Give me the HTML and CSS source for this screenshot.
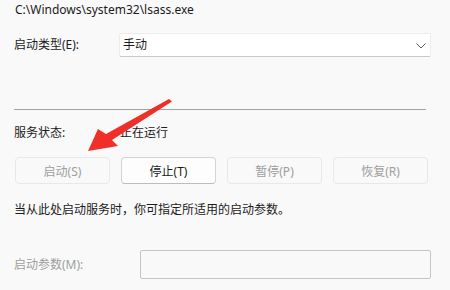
FILE: index.html
```html
<!DOCTYPE html>
<html lang="zh-CN">
<head>
<meta charset="utf-8">
<link rel="stylesheet" href="styles.css">
</head>
<body>
<div class="page">
  <div class="path">C:\Windows\system32\lsass.exe</div>
  <div class="row row-type">
    <span class="label">启动类型(E):</span>
    <div class="combo">
      <span class="combo-text">手动</span>
      <svg class="chev" width="10" height="6" viewBox="0 0 10 6"><path d="M0.5 0.5 L5 5 L9.5 0.5" fill="none" stroke="#5a5a5a" stroke-width="1"/></svg>
    </div>
  </div>
  <div class="sep"></div>
  <div class="row row-status">
    <span class="label status-label">服务状态:</span>
    <span class="value">正在运行</span>
  </div>
  <div class="buttons">
    <div class="btn disabled">启动(S)</div>
    <div class="btn">停止(T)</div>
    <div class="btn disabled">暂停(P)</div>
    <div class="btn disabled">恢复(R)</div>
  </div>
  <div class="desc">当从此处启动服务时，你可指定所适用的启动参数。</div>
  <div class="row row-params">
    <span class="label param-label">启动参数(M):</span>
    <div class="input"></div>
  </div>
</div>
<svg class="arrow" width="450" height="290" viewBox="0 0 450 290">
  <polygon points="88,151 98,129 106,134 169,99 172,101.5 112,140 118,146" fill="#ee2f2a"/>
</svg>
</body>
</html>
```
FILE: styles.css
```css
html, body {
  margin: 0;
  padding: 0;
  background: #f9f9f9;
  width: 450px;
  height: 290px;
  overflow: hidden;
}
body {
  font-family: "Noto Sans", "Noto Sans CJK SC", sans-serif;
  font-size: 12px;
  color: #1b1b1b;
  position: relative;
}
.page {
  padding: 2px 19px 0 14px;
}
.path {
  line-height: 16px;
  height: 16px;
  padding-left: 1px;
}
.row {
  display: flex;
  align-items: center;
}
.label {
  line-height: 16px;
  flex: none;
}
.row-type {
  margin-top: 15px;
}
.row-type .label {
  width: 105px;
}
.combo {
  flex: 1;
  height: 24px;
  box-sizing: border-box;
  background: #ffffff;
  border: 1px solid #ececec;
  border-bottom-color: #c9c9c9;
  border-radius: 2px;
  display: flex;
  align-items: center;
  justify-content: space-between;
  padding: 0 4px 0 3px;
}
.combo-text {
  line-height: 16px;
}
.chev {
  display: block;
  margin-top: 1px;
}
.sep {
  margin-top: 52px;
  height: 1px;
  width: 412px;
  background: #a3a3a3;
}
.row-status {
  margin-top: 15px;
}
.status-label {
  width: 106px;
}
.value {
  line-height: 16px;
}
.buttons {
  margin-top: 16px;
  display: grid;
  grid-template-columns: repeat(4, 95px);
  column-gap: 11px;
  padding-left: 1px;
}
.btn {
  height: 27px;
  box-sizing: border-box;
  border: 1px solid #d4d4d4;
  border-bottom-color: #bdbdbd;
  border-radius: 4px;
  background: #fdfdfd;
  display: flex;
  align-items: center;
  justify-content: center;
  color: #1b1b1b;
}
.btn.disabled {
  background: #f9f9f9;
  border-color: #e8e8e8;
  color: #9e9e9e;
}
.desc {
  margin-top: 18px;
  line-height: 16px;
}
.row-params {
  margin-top: 32px;
}
.param-label {
  width: 126px;
  color: #9e9e9e;
}
.input {
  flex: 1;
  height: 29px;
  box-sizing: border-box;
  border: 1px solid #c4c4c4;
  border-radius: 2px;
  background: #f9f9f9;
}
.arrow {
  position: absolute;
  left: 0;
  top: 0;
  pointer-events: none;
}
```
